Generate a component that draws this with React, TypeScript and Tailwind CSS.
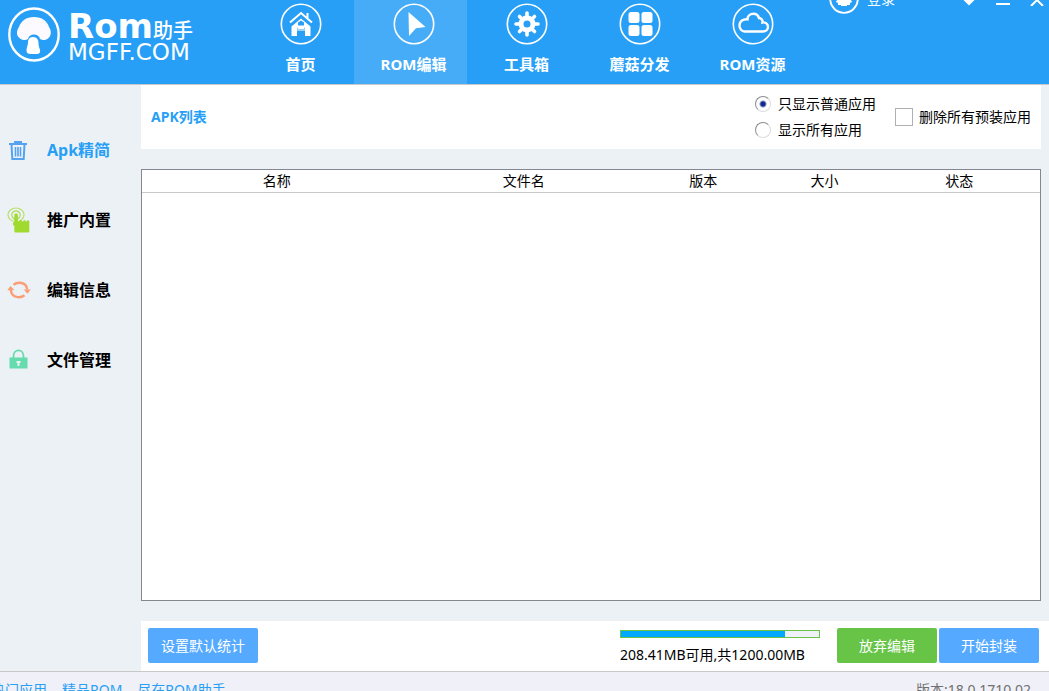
import { useState } from "react";
import type { ReactNode } from "react";
import { clsx } from "clsx";

const TOTAL_MB = 1200;
const FREE_MB = 208.41;

/* ---------- Icons ---------- */

function LogoIcon() {
    return (
        <svg width="52" height="56" viewBox="0 0 52 56" className="shrink-0" aria-hidden="true">
            <ellipse cx="26" cy="27.500" rx="24.700" ry="26" fill="none" stroke="#fff" strokeWidth="2.400" />
            <path
                d="M26 10c-8 0-13 4-15 10-3 4-2.500 9 .5 11 2.500 2.500 6.500 2.500 8.500 1 .5-3 3-4.500 6-4.500s5.500 1.500 6 4.500c2.500 1.500 6 1.500 8.500-1 3-2.500 3-7.500.5-11-2-6-7-10-15-10z"
                fill="#fdfaff"
            />
            <path d="M25 30c-4 0-5 3-5 6 0 2-1.500 4-1.500 7 0 3 1.500 4 4 4h6c2.500 0 4-1 3.500-4-.5-2-1.500-4-1.500-7 0-3-1.500-6-5.500-6z" fill="#fff" />
        </svg>
    );
}

function NavCircle({ children }: { children: ReactNode }) {
    return (
        <svg width="42" height="42" viewBox="0 0 42 42" fill="#fff" aria-hidden="true">
            <circle cx="21" cy="21" r="19.700" fill="none" stroke="#fff" strokeWidth="1.600" />
            {children}
        </svg>
    );
}

const homeIcon = (
    <NavCircle>
        <path d="M10 19.500 21 10l11 9.500M27.500 15v-5" fill="none" stroke="#fff" strokeWidth="2" />
        <path fillRule="evenodd" d="M21 15.500l9.500 8V33h-5.500v-8.500h-8V33h-5.500v-9.500zM18 19.500v3h6v-3l-3-2zM17.500 24.500h7v1.500h-7z" />
        <path d="M17 26.500h8v1h-8z" />
    </NavCircle>
);

const editIcon = (
    <NavCircle>
        <path d="M15.500 9l17 15-9.500 1.200L16 33z" />
    </NavCircle>
);

const toolsIcon = (
    <NavCircle>
        <circle cx="21" cy="21" r="6" fill="none" stroke="#fff" strokeWidth="5" />
        <g stroke="#fff" strokeWidth="3.600" strokeLinecap="round">
            <path d="M21 13v-3M21 29v3M13 21h-3M29 21h3M15.500 15.500l-2-2M26.500 26.500l2 2M15.500 26.500l-2 2M26.500 15.500l2-2" />
        </g>
    </NavCircle>
);

const gridIcon = (
    <NavCircle>
        <rect x="9.500" y="9" width="11" height="11" rx="2.500" />
        <rect x="22.500" y="9" width="11" height="11" rx="2.500" />
        <rect x="9.500" y="22" width="11" height="11" rx="2.500" />
        <rect x="22.500" y="22" width="11" height="11" rx="2.500" />
    </NavCircle>
);

const cloudIcon = (
    <NavCircle>
        <path
            d="M12.500 28.500h18.500c3 0 5-2 5-4.500 0-3-2.500-5-5.500-4.500.5-2.500-1.500-4.500-3.500-4.500-1-3-3-4.200-5.500-4.200-3.500 0-6 2.500-6 5.500-4-.5-8 1.700-8 6.200 0 3.500 2.500 6 5 6z"
            fill="none"
            stroke="#fff"
            strokeWidth="2.400"
        />
    </NavCircle>
);

const trashIcon = (
    <svg width="22" height="22" viewBox="0 0 22 22" fill="none" stroke="#55a3f0" strokeWidth="2" aria-hidden="true">
        <path d="M1 5h18M7 4.500V3h6v1.500M3.500 5l.8 15h11.400l.8-15" />
        <path d="M7.500 8v9.500M10 8v9.500M12.500 8v9.500" strokeWidth="1.600" />
    </svg>
);

const touchIcon = (
    <svg width="24" height="26" viewBox="0 0 24 26" aria-hidden="true">
        <ellipse cx="9" cy="7.800" rx="8" ry="6.800" fill="none" stroke="#b9e06c" strokeWidth="1.200" />
        <circle cx="9" cy="8" r="4.200" fill="none" stroke="#b0dc5a" strokeWidth="1.200" />
        <path d="M7.300 8.500c0-2.600 3.600-2.600 3.600 0v6h1.400c.3-2 2.600-2 2.800 0h1c.3-1.800 2.400-1.800 2.700 0h.9c.4-1.700 2.600-1.500 2.600.4V24c0 1-.5 1.500-1.500 1.500H8.800c-1 0-1.500-.5-1.500-1.500v-5c-2-1-2-3.500 0-4z" fill="#a0da2f" />
    </svg>
);

const refreshIcon = (
    <svg width="24" height="18" viewBox="0 0 24 18" fill="none" stroke="#fb9d76" strokeWidth="2.400" aria-hidden="true">
        <path d="M6.500 3.800C10.500.5 19.500.8 20.200 8.500M17.500 14.200C13.500 17.500 4.500 17.200 3.800 9" />
        <path d="M16.700 8.500h7L20.500 12.800zM.3 9.200h7L3.500 4.900z" fill="#fb9d76" stroke="none" />
    </svg>
);

const lockIcon = (
    <svg width="22" height="22" viewBox="0 0 22 22" aria-hidden="true">
        <path d="M5.500 9V7c0-7.500 10-7.500 10 0v2" fill="none" stroke="#66dbae" strokeWidth="1.800" />
        <rect x="1.500" y="8.500" width="18" height="11" fill="#66dbae" />
        <path d="M8.500 12h4v2h-1v3h-2v-3h-1z" fill="#ecf1f6" />
    </svg>
);

/* ---------- Data ---------- */

const tabs = [
    { id: "home", label: "首页", icon: homeIcon },
    { id: "edit", label: "ROM编辑", icon: editIcon },
    { id: "tools", label: "工具箱", icon: toolsIcon },
    { id: "share", label: "蘑菇分发", icon: gridIcon },
    { id: "res", label: "ROM资源", icon: cloudIcon },
];

const menu = [
    { id: "apk", label: "Apk精简", icon: trashIcon },
    { id: "promo", label: "推广内置", icon: touchIcon },
    { id: "info", label: "编辑信息", icon: refreshIcon },
    { id: "files", label: "文件管理", icon: lockIcon },
];

const columns = [
    { label: "名称", width: "w-[30%]" },
    { label: "文件名", width: "w-[25%]" },
    { label: "版本", width: "w-[15%]" },
    { label: "大小", width: "w-[12%]" },
    { label: "状态", width: "w-[18%]" },
];

const radioClass =
    "size-4 shrink-0 appearance-none rounded-full border border-t-[#8e8e8e] border-l-[#8e8e8e] border-r-[#dcdcdc] border-b-[#dcdcdc] bg-white checked:bg-[radial-gradient(circle,#12288a_2px,transparent_4px)]";

/* ---------- Sections ---------- */

function Header() {
    const [active, setActive] = useState("edit");

    return (
        <header className="flex h-[85px] shrink-0 border-b border-[#c8c8c8] bg-[#289ff6] text-white">
            <div className="flex w-[241px] shrink-0 gap-2 pt-[7px] pl-2 font-['DejaVu_Sans','Noto_Sans_CJK_SC',sans-serif]">
                <LogoIcon />
                <div className="pt-px whitespace-nowrap">
                    <div className="flex h-9 items-baseline">
                        <span className="text-[34px] leading-9 font-bold">Rom</span>
                        <span className="text-[20px] leading-6 font-medium">助手</span>
                    </div>
                    <div className="text-[23px] leading-4">MGFF.COM</div>
                </div>
            </div>

            <nav className="flex">
                {tabs.map((tab) => (
                    <button
                        key={tab.id}
                        type="button"
                        onClick={() => setActive(tab.id)}
                        className={clsx(
                            "flex w-[113px] flex-col items-center gap-[9px] pt-[3px] pl-[6px] text-[15px] leading-5 font-bold",
                            active === tab.id && "bg-[#47acf8]"
                        )}
                    >
                        {tab.icon}
                        {tab.label}
                    </button>
                ))}
            </nav>

            {/* Account and window buttons, tucked against the top edge */}
            <div className="-mt-[17px] flex h-8 flex-1 justify-between pr-[5px] pl-[23px]">
                <button type="button" className="flex items-center gap-2 text-sm">
                    <svg width="30" height="30" viewBox="0 0 30 30" fill="#fff" aria-hidden="true">
                        <circle cx="15" cy="15" r="13.800" fill="none" stroke="#fff" strokeWidth="1.800" />
                        <path d="M8 8h14v8l1 2-2 1v2h-3v1h-6v-1H9v-2l-2-1 1-2z" />
                    </svg>
                    登录
                </button>
                <div className="flex items-center gap-5">
                    <button type="button" aria-label="菜单">
                        <svg width="14" height="14" viewBox="0 0 14 14" fill="#fff">
                            <path d="M1 4h12v3.500L7 13.500 1 7.500z" />
                        </svg>
                    </button>
                    <button type="button" aria-label="最小化">
                        <svg width="14" height="14" viewBox="0 0 14 14" fill="#fff">
                            <path d="M0 11h14v2H0z" />
                        </svg>
                    </button>
                    <button type="button" aria-label="关闭">
                        <svg width="14" height="14" viewBox="0 0 14 14" stroke="#fff" strokeWidth="2">
                            <path d="M1 2l12 12M13 2L1 14" />
                        </svg>
                    </button>
                </div>
            </div>
        </header>
    );
}

function Sidebar() {
    const [active, setActive] = useState("apk");

    return (
        <aside className="w-[141px] shrink-0 pt-[30px]">
            {menu.map((item) => (
                <button
                    key={item.id}
                    type="button"
                    onClick={() => setActive(item.id)}
                    className={clsx(
                        "flex h-[70px] w-full items-center gap-4 pl-[7px] text-base font-bold",
                        active === item.id ? "text-[#289ff6]" : "text-black"
                    )}
                >
                    <span className="flex w-6 justify-center">{item.icon}</span>
                    {item.label}
                </button>
            ))}
        </aside>
    );
}

function FilterBar() {
    return (
        <section className="mr-2 flex h-16 shrink-0 items-center justify-between bg-white px-[10px]">
            <h1 className="text-sm font-bold text-[#289ff6]">APK列表</h1>
            <div className="flex items-center gap-[19px]">
                <div className="flex flex-col gap-[6px] leading-5">
                    <label className="flex items-center gap-[7px]">
                        <input type="radio" name="filter" defaultChecked className={radioClass} />
                        只显示普通应用
                    </label>
                    <label className="flex items-center gap-[7px]">
                        <input type="radio" name="filter" className={radioClass} />
                        显示所有应用
                    </label>
                </div>
                <label className="flex items-center gap-[6px]">
                    <input
                        type="checkbox"
                        className="size-[18px] appearance-none border border-[#b0b0b0] bg-white checked:bg-[#289ff6]"
                    />
                    删除所有预装应用
                </label>
            </div>
        </section>
    );
}

function AppTable() {
    return (
        <div className="my-5 mr-2 min-h-0 flex-1 border border-[#828790] bg-white">
            <table className="w-full table-fixed border-collapse">
                <thead>
                    <tr className="h-[22px] border-b border-[#c8c8c8]">
                        {columns.map((col) => (
                            <th key={col.label} className={clsx("p-0 leading-5 font-normal", col.width)}>
                                {col.label}
                            </th>
                        ))}
                    </tr>
                </thead>
                <tbody />
            </table>
        </div>
    );
}

function ActionBar() {
    const used = ((TOTAL_MB - FREE_MB) / TOTAL_MB) * 100;

    return (
        <section className="flex h-[50px] shrink-0 items-start bg-white pt-[7px] pr-[10px] pl-[7px] text-white">
            <button type="button" className="h-[35px] w-[110px] rounded-xs bg-[#55aaff]">
                设置默认统计
            </button>
            <div className="mr-[17px] ml-auto w-[200px] pt-[2px] text-black">
                <div
                    role="progressbar"
                    aria-label="空间"
                    aria-valuenow={Math.round(used)}
                    className="h-2 border border-[#67c447] bg-[#f0f0f8]"
                >
                    <div className="h-full bg-[#00a8ff]" style={{ width: `${used}%` }} />
                </div>
                <p className="mt-[7px] leading-5 whitespace-nowrap">
                    {FREE_MB}MB可用,共{TOTAL_MB.toFixed(2)}MB
                </p>
            </div>
            <button type="button" className="mr-[2px] h-[35px] w-[100px] rounded-xs bg-[#67c447]">
                放弃编辑
            </button>
            <button type="button" className="h-[35px] w-[100px] rounded-xs bg-[#55aaff]">
                开始封装
            </button>
        </section>
    );
}

export default function App() {
    return (
        <div className="flex h-screen flex-col overflow-hidden bg-[#ecf1f6] font-['Noto_Sans','Noto_Sans_CJK_SC',sans-serif] text-sm text-black">
            <Header />
            <div className="flex min-h-0 flex-1">
                <Sidebar />
                <main className="flex min-w-0 flex-1 flex-col">
                    <FilterBar />
                    <AppTable />
                    <ActionBar />
                </main>
            </div>
            <footer className="flex h-5 shrink-0 justify-between border-t border-[#c8c8c8] bg-[#f0f0f8] pt-2 pr-[18px] leading-5 text-[#707070]">
                <div className="-ml-[9px] flex gap-[15px] text-[#289ff6]">
                    <a href="#hot">热门应用</a>
                    <a href="#best">精品ROM</a>
                    <a href="#all">尽在ROM助手</a>
                </div>
                <span>版本:18.0.1710.02</span>
            </footer>
        </div>
    );
}
